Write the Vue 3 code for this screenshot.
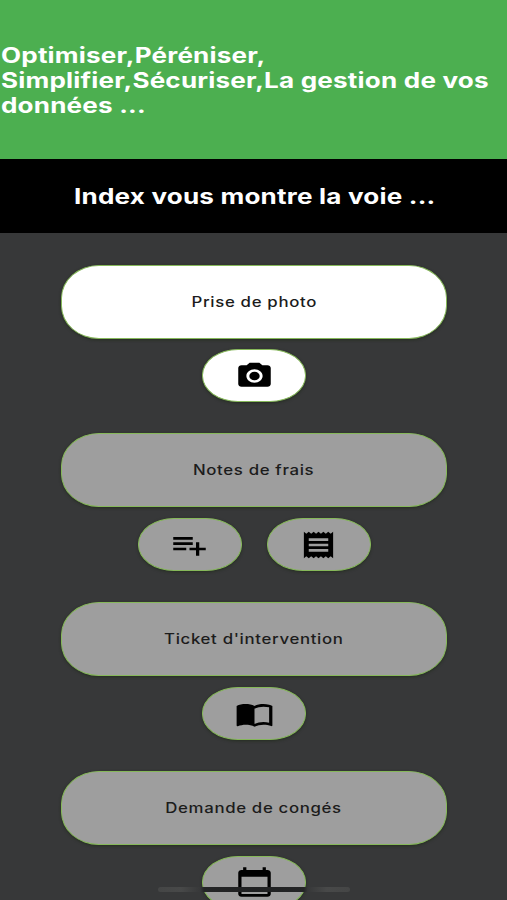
<script setup>
import { ref } from 'vue'

const icons = {
  camera: 'M9 2L7.17 4H4c-1.1 0-2 .9-2 2v12c0 1.1.9 2 2 2h16c1.1 0 2-.9 2-2V6c0-1.1-.9-2-2-2h-3.17L15 2H9zm3 15c-2.76 0-5-2.24-5-5s2.24-5 5-5 5 2.24 5 5-2.24 5-5 5zM15.2 12a3.2 3.2 0 1 1-6.4 0a3.2 3.2 0 1 1 6.4 0z',
  listAdd: 'M14 10H2v2h12v-2zm0-4H2v2h12V6zm4 8v-4h-2v4h-4v2h4v4h2v-4h4v-2h-4zM2 16h8v-2H2v2z',
  receipt: 'M18 17H6v-2h12v2zm0-4H6v-2h12v2zm0-4H6V7h12v2zM3 22l1.5-1.5L6 22l1.5-1.5L9 22l1.5-1.5L12 22l1.5-1.5L15 22l1.5-1.5L18 22l1.5-1.5L21 22V2l-1.5 1.5L18 2l-1.5 1.5L15 2l-1.5 1.5L12 2l-1.5 1.5L9 2 7.5 3.5 6 2 4.5 3.5 3 2v20z',
  book: 'M21 5c-1.11-.35-2.33-.5-3.5-.5-1.95 0-4.05.4-5.5 1.5-1.45-1.1-3.55-1.5-5.5-1.5S2.45 4.9 1 6v14.65c0 .25.25.5.5.5.1 0 .15-.05.25-.05C3.1 20.45 5.05 20 6.5 20c1.95 0 4.05.4 5.5 1.5 1.35-.85 3.8-1.5 5.5-1.5 1.65 0 3.35.3 4.75 1.05.1.05.15.05.25.05.25 0 .5-.25.5-.5V6c-.6-.45-1.25-.75-2-1zm0 13.5c-1.1-.35-2.3-.5-3.5-.5-1.7 0-4.15.65-5.5 1.5V8c1.35-.85 3.8-1.5 5.5-1.5 1.2 0 2.4.15 3.5.5v11.5z',
  calendar: 'M20 3h-1V1h-2v2H7V1H5v2H4c-1.1 0-2 .9-2 2v16c0 1.1.9 2 2 2h16c1.1 0 2-.9 2-2V5c0-1.1-.9-2-2-2zm0 18H4V8h16v13z'
}

const sections = ref([
  { label: 'Prise de photo', active: true, actions: ['camera'] },
  { label: 'Notes de frais', active: false, actions: ['listAdd', 'receipt'] },
  { label: "Ticket d'intervention", active: false, actions: ['book'] },
  { label: 'Demande de congés', active: false, actions: ['calendar'] }
])
</script>

<template>
  <div class="screen">
    <header class="hero">
      <h1>Optimiser,Péréniser,<br />Simplifier,Sécuriser,La gestion de vos<br />données ...</h1>
    </header>

    <div class="tagline">
      <h2>Index vous montre la voie ...</h2>
    </div>

    <main class="menu">
      <section
        v-for="section in sections"
        :key="section.label"
        class="section"
        :class="{ active: section.active }"
      >
        <button class="btn btn-main">
          <span class="label">{{ section.label }}</span>
        </button>
        <div class="actions">
          <button v-for="name in section.actions" :key="name" class="btn btn-icon">
            <svg viewBox="0 0 24 24" preserveAspectRatio="none">
              <path :d="icons[name]" />
            </svg>
          </button>
        </div>
      </section>
    </main>

    <div class="home-indicator"></div>
  </div>
</template>

<style>
body {
  margin: 0;
  overflow: hidden;
}
</style>

<style scoped>
.screen {
  position: relative;
  display: flex;
  flex-direction: column;
  height: 900px;
  overflow: hidden;
  background: #373839;
  font-family: Inter, "Liberation Sans", sans-serif;
}

.hero {
  display: flex;
  align-items: center;
  box-sizing: border-box;
  flex-shrink: 0;
  height: 159px;
  padding: 1px 0 0 1px;
  background: #4caf50;
  color: white;
}

.hero h1 {
  margin: 0;
  font-size: 21px;
  line-height: 25px;
  font-weight: 700;
  letter-spacing: 0.16px;
  white-space: nowrap;
  transform: scaleX(1.24);
  transform-origin: left;
}

.tagline {
  display: flex;
  align-items: center;
  justify-content: center;
  box-sizing: border-box;
  flex-shrink: 0;
  height: 74px;
  padding-left: 2px;
  background: black;
  color: white;
}

.tagline h2 {
  margin: 0;
  font-size: 21px;
  line-height: 25px;
  font-weight: 700;
  letter-spacing: 0.16px;
  white-space: nowrap;
  transform: scaleX(1.24);
}

.menu {
  display: flex;
  flex-direction: column;
  gap: 31px;
  padding: 31.6px 0 0 1px;
}

.section {
  display: flex;
  flex-direction: column;
  align-items: center;
  gap: 10.5px;
}

.actions {
  display: flex;
  gap: 25px;
}

.btn {
  display: flex;
  align-items: center;
  justify-content: center;
  box-sizing: border-box;
  padding: 0;
  border: 1px solid #86b85a;
  background: #9e9e9e;
  color: #1c1c1c;
  font-family: inherit;
  box-shadow: 0 1px 3px rgba(20, 35, 10, 0.5);
}

.active .btn {
  background: white;
}

.btn-main {
  width: 386px;
  height: 74px;
  border-radius: 38px / 33px;
}

.btn-icon {
  width: 104px;
  height: 53.4px;
  border-radius: 36px / 26px;
}

.btn-icon svg {
  width: 39px;
  height: 32px;
  fill: black;
}

.label {
  padding-bottom: 1px;
  font-size: 14px;
  font-weight: 500;
  letter-spacing: 0.55px;
  white-space: nowrap;
  transform: scaleX(1.2);
}

.home-indicator {
  position: absolute;
  left: 158px;
  bottom: 8px;
  width: 192px;
  height: 5px;
  border-radius: 3px;
  background: linear-gradient(to right, #454646 0, #484949 12%, #373839 22%, #242526 24%, #202122 50%, #242526 76%, #373839 78%, #484949 88%, #454646 100%);
}
</style>
